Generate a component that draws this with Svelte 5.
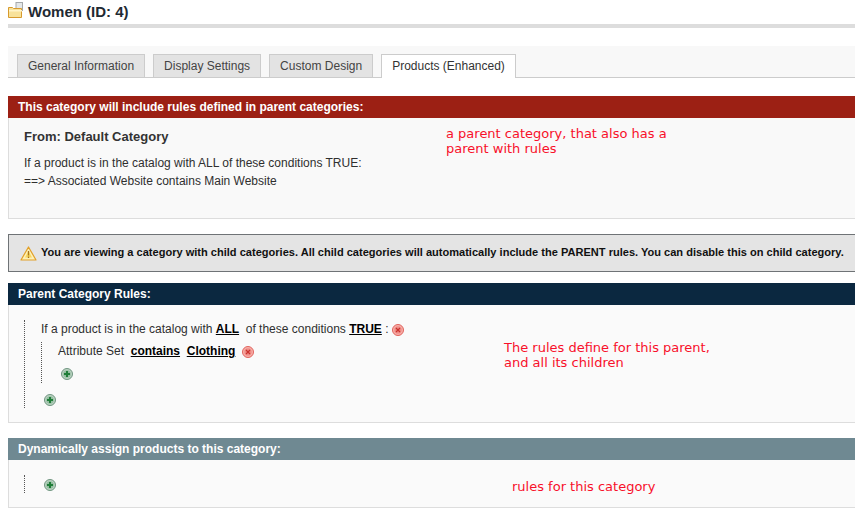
<script>
    const tabs = ['General Information', 'Display Settings', 'Custom Design', 'Products (Enhanced)'];
    let activeTab = 3;
</script>

{#snippet addIcon()}
    <svg class="icon" width="12" height="12" viewBox="0 0 12 12">
        <circle cx="6" cy="6" r="5.500" fill="#bcd3c2" stroke="#6f9580" stroke-width="1"/>
        <circle cx="6" cy="6" r="3.800" fill="#93bda0"/>
        <path d="M6 3v6M3 6h6" stroke="#1f7d38" stroke-width="2"/>
    </svg>
{/snippet}

{#snippet removeIcon()}
    <svg class="icon" width="12" height="12" viewBox="0 0 12 12">
        <circle cx="6" cy="6" r="5.500" fill="#f7b0aa" stroke="#e0625c" stroke-width="1"/>
        <circle cx="6" cy="6" r="3.700" fill="#ef8c86"/>
        <path d="M4 4l4 4M8 4l-4 4" stroke="#c8302c" stroke-width="1.200"/>
    </svg>
{/snippet}

<div class="page">
    <div class="title">
        <svg class="folder" width="16" height="16" viewBox="0 0 16 16">
            <rect x="8" y="0.500" width="6.500" height="8" fill="#e4e7e8" stroke="#a5a9ac"/>
            <path d="M0.500 15.500V5.500h4l1 1h8v9z" fill="#f8e29a" stroke="#d79a2e"/>
            <rect x="1" y="8" width="13" height="1.500" fill="#fff4c8"/>
        </svg>
        <h3>Women (ID: 4)</h3>
    </div>

    <ul class="tabs">
        {#each tabs as tab, i}
            <li class:active={i === activeTab}>{tab}</li>
        {/each}
    </ul>

    <div class="head red">This category will include rules defined in parent categories:</div>
    <div class="box first">
        <h4>From: Default Category</h4>
        <p>If a product is in the catalog with ALL of these conditions TRUE:</p>
        <p>==&gt; Associated Website contains Main Website</p>
    </div>

    <div class="notice">
        <svg width="17" height="15" viewBox="0 0 17 15">
            <path d="M8.500 1L16 14H1z" fill="#fdf0b8" stroke="#e2a028" stroke-width="1.200" stroke-linejoin="round"/>
            <path d="M8.500 5L12 11.500H5z" fill="#f8d860"/>
            <path d="M8.500 5v4.500M8.500 10.500v1.500" stroke="#a8741c" stroke-width="1.300"/>
        </svg>
        <span>You are viewing a category with child categories. All child categories will automatically include the PARENT rules. You can disable this on child category.</span>
    </div>

    <div class="head navy">Parent Category Rules:</div>
    <div class="box rules">
        <div class="tree">
            <div class="line">If a product is in the catalog with <b>ALL</b>&nbsp; of these conditions <b>TRUE</b> : {@render removeIcon()}</div>
            <div class="tree inner">
                <div class="line">Attribute Set &nbsp;<b>contains</b>&nbsp; <b>Clothing</b> &nbsp;{@render removeIcon()}</div>
                <div class="add">{@render addIcon()}</div>
            </div>
            <div class="add outer">{@render addIcon()}</div>
        </div>
    </div>

    <div class="head slate">Dynamically assign products to this category:</div>
    <div class="box last">
        <div class="tree short">
            <div class="add outer">{@render addIcon()}</div>
        </div>
    </div>

    <div class="note n1">a parent category, that also has a<br>parent with rules</div>
    <div class="note n2">The rules define for this parent,<br>and all its children</div>
    <div class="note n3">rules for this category</div>
</div>

<style>
    :global(body) {
        margin: 0;
        background: #fff;
    }

    .page {
        position: relative;
        width: 855px;
        height: 520px;
        overflow: hidden;
        box-sizing: border-box;
        padding-left: 8px;
        font-family: "Liberation Sans", Arial, sans-serif;
        font-size: 12px;
        color: #2f2f2f;
    }

    .title {
        display: flex;
        align-items: center;
        gap: 4px;
        height: 24px;
        border-bottom: 4px solid #ddd;
    }

    .folder {
        margin-top: -4px;
    }

    h3 {
        margin: -1px 0 0;
        font-size: 15px;
        line-height: 22px;
        color: #1f2a33;
    }

    .tabs {
        display: flex;
        gap: 8px;
        list-style: none;
        margin: 18px 0 18px;
        padding: 8px 0 0 9px;
        height: 23px;
        background: #f8f8f8;
        border-bottom: 1px solid #ccc;
    }

    .tabs li {
        box-sizing: border-box;
        height: 23px;
        padding: 0 10px;
        line-height: 23px;
        background: #e3e3e3;
        border: 1px solid #ccc;
        border-bottom: 0;
        color: #444;
    }

    .tabs li.active {
        height: 24px;
        background: #fff;
        color: #333;
        position: relative;
    }

    .head {
        height: 22px;
        line-height: 22px;
        padding-left: 10px;
        font-weight: bold;
        color: #fff;
    }

    .red { background: #9c2014; }
    .navy { background: #0b2840; }
    .slate { background: #6f8992; }

    .box {
        box-sizing: border-box;
        background: #fafafa;
        border: 1px solid #ddd;
        border-top: 0;
        border-right: 0;
    }

    .first {
        height: 101px;
        padding: 11px 15px;
        background: #f9f9f9;
    }

    h4 {
        margin: 0 0 10px;
        font-size: 13px;
        line-height: 15px;
        color: #333;
    }

    p {
        margin: 0;
        line-height: 18px;
        color: #2f2f2f;
    }

    .notice {
        box-sizing: border-box;
        display: flex;
        align-items: center;
        gap: 4px;
        height: 38px;
        margin: 15px 0 11px;
        padding-left: 11px;
        background: #e4e4e4;
        border: 1px solid #6f7376;
        border-right: 0;
        font-weight: bold;
        font-size: 11.050px;
        color: #111;
        white-space: nowrap;
    }

    .notice svg {
        flex: none;
    }

    .notice span {
        margin-top: -2px;
    }

    .rules {
        height: 118px;
        padding: 15px 0 0 15px;
        margin-bottom: 15px;
    }

    .tree {
        border-left: 1px dotted #555;
        padding-left: 16px;
        height: 88px;
        box-sizing: border-box;
        position: relative;
    }

    .tree.inner {
        height: 41px;
        margin-top: 4px;
        padding-left: 16px;
    }

    .tree.short {
        height: 18px;
    }

    .last {
        height: 48px;
        padding: 15px 0 0 15px;
    }

    .line {
        line-height: 18px;
        height: 18px;
        color: #2f2f2f;
        white-space: nowrap;
    }

    .line b {
        color: #000;
        text-decoration: underline;
    }

    .icon {
        vertical-align: -3px;
    }

    .add {
        line-height: 12px;
        height: 12px;
        margin-top: 7px;
        padding-left: 3px;
    }

    .add.outer {
        position: absolute;
        left: 19px;
        top: 73px;
        margin: 0;
        padding: 0;
    }

    .short .add.outer {
        top: 3px;
    }

    .note {
        position: absolute;
        font-family: "DejaVu Sans", sans-serif;
        font-size: 13px;
        line-height: 15px;
        color: #f8102a;
        white-space: nowrap;
    }

    .n1 { left: 446px; top: 126px; }
    .n2 { left: 504px; top: 340px; }
    .n3 { left: 512px; top: 479px; }
</style>
